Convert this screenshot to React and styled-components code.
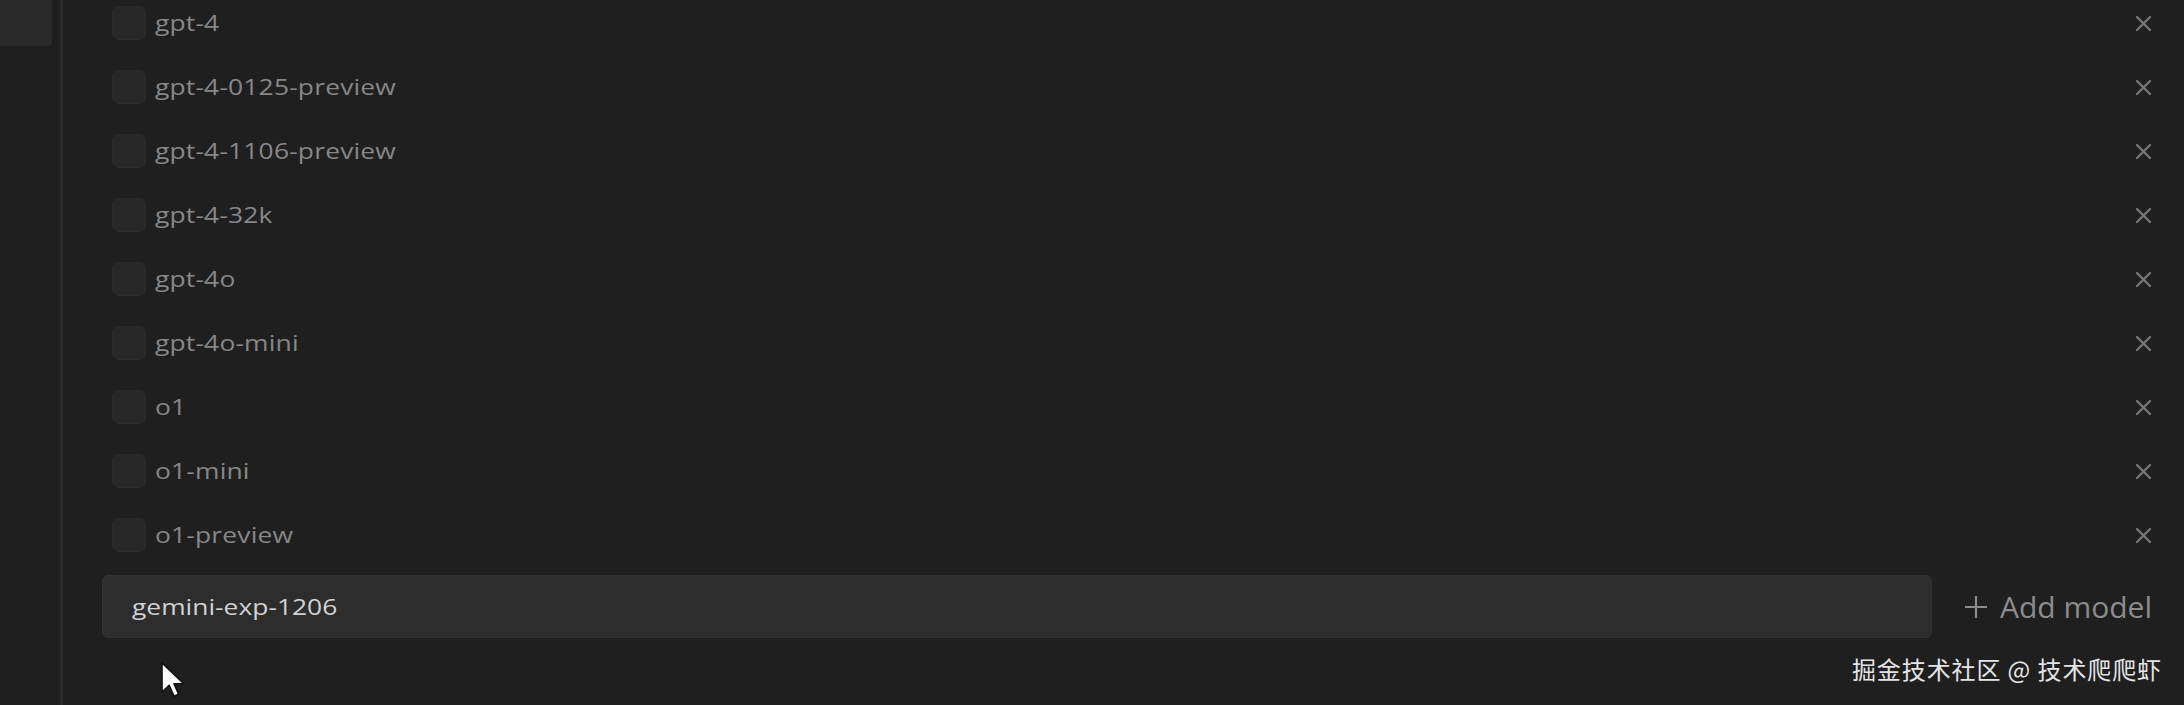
import React from 'react';
import styled, { createGlobalStyle } from 'styled-components';

const GlobalStyle = createGlobalStyle`
  html, body {
    margin: 0;
    padding: 0;
    background: #1f1f1f;
    overflow: hidden;
  }
`;

const Page = styled.div`
  position: relative;
  display: flex;
  flex-direction: row;
  width: 2184px;
  height: 705px;
  overflow: hidden;
  background: #1f1f1f;
  font-family: "Open Sans", "Noto Sans", sans-serif;
`;

const Sidebar = styled.div`
  width: 60px;
  flex-shrink: 0;
  background: #1e1e1e;
  border-right: 3px solid #2b2b2b;
`;

const SideItem = styled.div`
  width: 52px;
  height: 46px;
  background: #2a2a2a;
  border-bottom-right-radius: 4px;
`;

const Main = styled.div`
  flex: 1;
  display: flex;
  flex-direction: column;
  padding: 0 32px 0 39px;
`;

const List = styled.ul`
  list-style: none;
  margin: -9px 0 0;
  padding: 0;
`;

const Row = styled.li`
  display: flex;
  align-items: center;
  height: 64px;
  padding-left: 10px;
`;

const Check = styled.span`
  width: 34px;
  height: 34px;
  box-sizing: border-box;
  border-radius: 7px;
  background: #282828;
  border: 1px solid #2c2c2c;
  flex-shrink: 0;
`;

const NameCell = styled.div`
  flex: 1;
  margin-left: 9px;
`;

/* the capture is stretched sideways, so the glyphs are widened the same way */
const Wide = styled.span`
  display: inline-block;
  transform: scaleX(1.2);
  transform-origin: left center;
  font-size: ${(p) => p.$size || 22}px;
  letter-spacing: ${(p) => p.$spacing ?? 0.15}px;
  color: ${(p) => p.$color || '#878787'};
  line-height: 1;
  padding-bottom: 2px;
`;

const Remove = styled.button`
  display: flex;
  align-items: center;
  justify-content: center;
  width: 17px;
  height: 17px;
  padding: 0;
  border: 0;
  background: transparent;
  cursor: pointer;
`;

const AddRow = styled.div`
  display: flex;
  align-items: center;
  gap: 32px;
  margin-top: 8px;
`;

const Input = styled.div`
  flex: 1;
  height: 63px;
  box-sizing: border-box;
  display: flex;
  align-items: center;
  padding-left: 29px;
  background: #2d2d2d;
  border: 1px solid #323232;
  border-radius: 6px;
`;

const AddButton = styled.button`
  display: flex;
  align-items: center;
  gap: 12px;
  padding: 0;
  border: 0;
  background: transparent;
  font-family: "Open Sans", "Noto Sans", sans-serif;
  font-size: 30px;
  color: #8c8c8c;
  cursor: pointer;
`;

const Watermark = styled.div`
  position: absolute;
  right: 22px;
  top: 653px;
  font-family: "Noto Sans CJK SC", "Noto Sans", sans-serif;
  font-size: 24px;
  line-height: 32px;
  color: #e4e4e4;
  letter-spacing: 0.9px;
`;

const Pointer = styled.svg`
  position: absolute;
  left: 160px;
  top: 661px;
`;

const models = [
  'gpt-4',
  'gpt-4-0125-preview',
  'gpt-4-1106-preview',
  'gpt-4-32k',
  'gpt-4o',
  'gpt-4o-mini',
  'o1',
  'o1-mini',
  'o1-preview',
];

const CloseIcon = () => (
  <svg width="17" height="17" viewBox="0 0 17 17">
    <path d="M2 2 L15 15 M15 2 L2 15" stroke="#767676" strokeWidth="2.4" strokeLinecap="round" />
  </svg>
);

const PlusIcon = () => (
  <svg width="24" height="24" viewBox="0 0 24 24">
    <path d="M12 1 V23 M1 12 H23" stroke="#8c8c8c" strokeWidth="2.2" />
  </svg>
);

const App = () => (
  <Page>
    <GlobalStyle />
    <Sidebar>
      <SideItem />
    </Sidebar>
    <Main>
      <List>
        {models.map((m) => (
          <Row key={m}>
            <Check />
            <NameCell>
              <Wide>{m}</Wide>
            </NameCell>
            <Remove aria-label="remove">
              <CloseIcon />
            </Remove>
          </Row>
        ))}
      </List>
      <AddRow>
        <Input>
          <Wide $color="#d2d2d2" $spacing={0}>gemini-exp-1206</Wide>
        </Input>
        <AddButton>
          <PlusIcon />
          Add model
        </AddButton>
      </AddRow>
    </Main>
    <Watermark>掘金技术社区 @ 技术爬爬虾</Watermark>
    <Pointer width="28" height="38" viewBox="0 0 14 19">
      <path d="M1 1 L1 15.5 L4.6 12.2 L7 17.6 L9.3 16.6 L7 11.4 L12 11.4 Z" fill="#ffffff" stroke="#111" strokeWidth="0.8" strokeLinejoin="round" />
    </Pointer>
  </Page>
);

export default App;
